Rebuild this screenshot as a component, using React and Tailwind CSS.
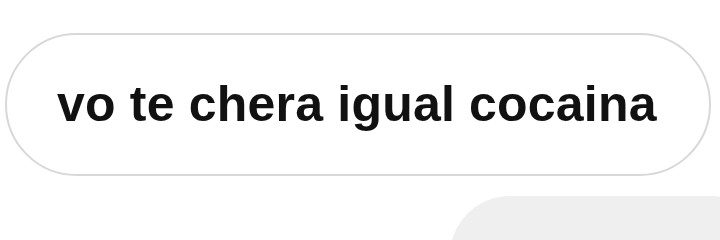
import React from 'react';

const App = () => {
  return (
    <div className="w-[720px] h-[240px] overflow-hidden bg-white pt-[33px] pl-[5px]">
      {/* received message bubble */}
      <div className="w-[706px] h-[143px] rounded-full border-2 border-[#d8d8d8] flex items-center pl-[50px]">
        <span className="text-[50px] font-bold text-[#111] tracking-[0.2px] leading-none font-['Liberation_Sans',Arial,sans-serif] pb-[2px]">
          vo te chera igual cocaina
        </span>
      </div>

      {/* next bubble, cut off by the window */}
      <div className="mt-[20px] ml-[445px] w-[320px] h-[120px] rounded-[62px] bg-[#efefef]" />
    </div>
  );
};

export default App;
